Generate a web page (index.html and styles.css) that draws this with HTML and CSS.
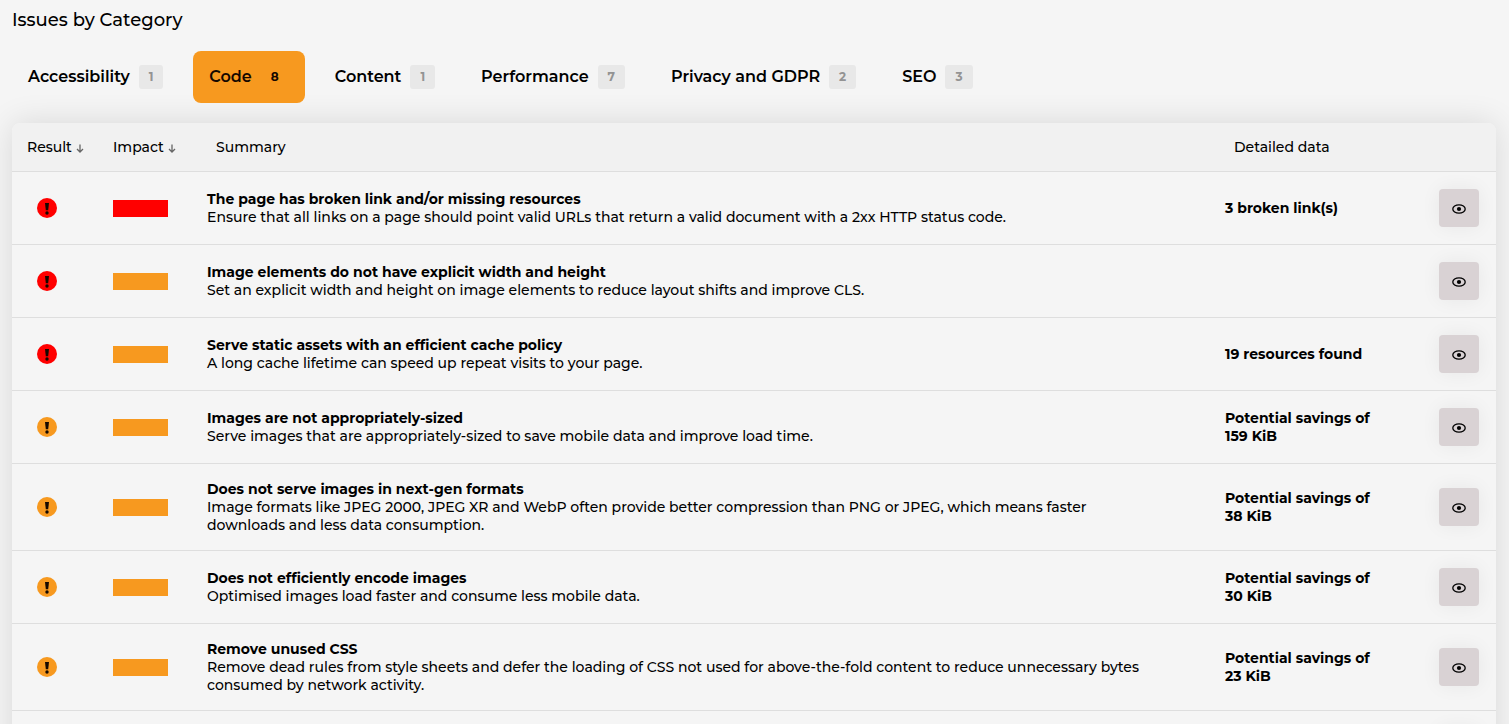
FILE: index.html
```html
<!DOCTYPE html>
<html lang="en">
<head>
<meta charset="utf-8">
<meta name="viewport" content="width=device-width, initial-scale=1">
<title>Issues by Category</title>
<link rel="stylesheet" href="styles.css">
</head>
<body>
<svg width="0" height="0" class="sprite" aria-hidden="true">
  <symbol id="eye" viewBox="0 0 14 10">
    <ellipse cx="7" cy="5" rx="6.200" ry="4.200" fill="none" stroke="currentColor" stroke-width="1.300"/>
    <circle cx="7" cy="5" r="2.1" fill="currentColor"/>
  </symbol>
  <symbol id="alert" viewBox="0 0 20 20">
    <circle cx="10" cy="10" r="10" fill="currentColor"/>
    <path d="M8 5h4l-.8 7.200H8.800z" fill="#140800"/>
    <circle cx="10" cy="15" r="1.700" fill="#140800"/>
  </symbol>
  <symbol id="down" viewBox="0 0 8 9">
    <path d="M4 .5v7.500M1 5l3 3 3-3" fill="none" stroke="currentColor" stroke-width="1.300"/>
  </symbol>
</svg>
<main class="page">
  <h1 class="title">Issues by Category</h1>
  <nav class="tabs" aria-label="Categories">
    <button class="tab" type="button">Accessibility <span class="count">1</span></button>
    <button class="tab tab-active" type="button">Code <span class="count">8</span></button>
    <button class="tab" type="button">Content <span class="count">1</span></button>
    <button class="tab" type="button">Performance <span class="count">7</span></button>
    <button class="tab" type="button">Privacy and GDPR <span class="count">2</span></button>
    <button class="tab" type="button">SEO <span class="count">3</span></button>
  </nav>
  <table class="issues">
    <colgroup><col class="col-result"><col class="col-impact"><col><col class="col-detail"><col class="col-action"></colgroup>
    <thead>
      <tr>
        <th scope="col">Result<svg class="sort"><use href="#down"/></svg></th>
        <th scope="col">Impact<svg class="sort"><use href="#down"/></svg></th>
        <th scope="col" class="wide">Summary</th>
        <th scope="col" class="wide">Detailed data</th>
        <td></td>
      </tr>
    </thead>
    <tbody>
      <tr>
        <td class="result bad"><svg class="alert"><use href="#alert"/></svg></td>
        <td><div class="impact high"></div></td>
        <td class="summary"><strong>The page has broken link and/or missing resources</strong><p>Ensure that all links on a page should point valid URLs that return a valid document with a 2xx HTTP status code.</p></td>
        <td class="detail">3 broken link(s)</td>
        <td class="action"><button class="view" type="button" aria-label="View"><svg class="eye"><use href="#eye"/></svg></button></td>
      </tr>
      <tr>
        <td class="result bad"><svg class="alert"><use href="#alert"/></svg></td>
        <td><div class="impact"></div></td>
        <td class="summary"><strong>Image elements do not have explicit width and height</strong><p>Set an explicit width and height on image elements to reduce layout shifts and improve CLS.</p></td>
        <td class="detail"></td>
        <td class="action"><button class="view" type="button" aria-label="View"><svg class="eye"><use href="#eye"/></svg></button></td>
      </tr>
      <tr>
        <td class="result bad"><svg class="alert"><use href="#alert"/></svg></td>
        <td><div class="impact"></div></td>
        <td class="summary"><strong>Serve static assets with an efficient cache policy</strong><p>A long cache lifetime can speed up repeat visits to your page.</p></td>
        <td class="detail">19 resources found</td>
        <td class="action"><button class="view" type="button" aria-label="View"><svg class="eye"><use href="#eye"/></svg></button></td>
      </tr>
      <tr>
        <td class="result"><svg class="alert"><use href="#alert"/></svg></td>
        <td><div class="impact"></div></td>
        <td class="summary"><strong>Images are not appropriately-sized</strong><p>Serve images that are appropriately-sized to save mobile data and improve load time.</p></td>
        <td class="detail">Potential savings of 159 KiB</td>
        <td class="action"><button class="view" type="button" aria-label="View"><svg class="eye"><use href="#eye"/></svg></button></td>
      </tr>
      <tr>
        <td class="result"><svg class="alert"><use href="#alert"/></svg></td>
        <td><div class="impact"></div></td>
        <td class="summary"><strong>Does not serve images in next-gen formats</strong><p>Image formats like JPEG 2000, JPEG XR and WebP often provide better compression than PNG or JPEG, which means faster downloads and less data consumption.</p></td>
        <td class="detail">Potential savings of 38 KiB</td>
        <td class="action"><button class="view" type="button" aria-label="View"><svg class="eye"><use href="#eye"/></svg></button></td>
      </tr>
      <tr>
        <td class="result"><svg class="alert"><use href="#alert"/></svg></td>
        <td><div class="impact"></div></td>
        <td class="summary"><strong>Does not efficiently encode images</strong><p>Optimised images load faster and consume less mobile data.</p></td>
        <td class="detail">Potential savings of 30 KiB</td>
        <td class="action"><button class="view" type="button" aria-label="View"><svg class="eye"><use href="#eye"/></svg></button></td>
      </tr>
      <tr>
        <td class="result"><svg class="alert"><use href="#alert"/></svg></td>
        <td><div class="impact"></div></td>
        <td class="summary"><strong>Remove unused CSS</strong><p>Remove dead rules from style sheets and defer the loading of CSS not used for above-the-fold content to reduce unnecessary bytes consumed by network activity.</p></td>
        <td class="detail">Potential savings of 23 KiB</td>
        <td class="action"><button class="view" type="button" aria-label="View"><svg class="eye"><use href="#eye"/></svg></button></td>
      </tr>
      <tr>
        <td></td><td></td><td></td><td></td>
        <td class="action"><button class="view" type="button" aria-label="View"><svg class="eye"><use href="#eye"/></svg></button></td>
      </tr>
    </tbody>
  </table>
</main>
</body>
</html>
```
FILE: styles.css
```css
* { box-sizing: border-box; }
body {
  margin: 0;
  background: #f5f5f5;
  color: #000;
  font: 500 14px/18px Montserrat, Inter, sans-serif;
}
.sprite { position: absolute; }
.page { height: 100vh; overflow: hidden; padding: 8px 13px 0 12px; }
.title { margin: 0; font-size: 18px; line-height: 24px; font-weight: 500; }
.tabs { display: flex; gap: 14px; margin: 19px 0 20px; }
.tab {
  display: flex;
  align-items: center;
  gap: 9px;
  height: 52px;
  padding: 0 16px;
  border: 0;
  border-radius: 8px;
  background: none;
  color: #000;
  font: 600 16px/24px Montserrat, Inter, sans-serif;
}
.tab-active { background: #f7991f; color: #140800; }
.count {
  padding: 0 10px;
  border-radius: 3px;
  background: #e8e8e8;
  color: #939393;
  font-size: 12px;
  font-weight: 700;
}
.tab-active .count { background: none; color: #140800; }
.issues {
  width: 100%;
  table-layout: fixed;
  border-collapse: separate;
  border-spacing: 0;
  border-radius: 8px 8px 0 0;
  background: #f5f5f5;
  box-shadow: 0 0 32px rgba(0, 0, 0, 0.12);
}
.col-result { width: 86px; }
.col-impact { width: 94px; }
.col-detail { width: 196px; }
.col-action { width: 90px; }
th, td {
  padding: 16px 15px;
  border-bottom: 1px solid #dedede;
  text-align: left;
  vertical-align: middle;
}
.summary { padding-right: 50px; }
thead th, thead td {
  padding: 15px;
  background: #f1f1f1;
  font-weight: 500;
  white-space: nowrap;
}
thead th.wide { padding-left: 24px; }
thead th:first-child { border-top-left-radius: 8px; }
thead td:last-child { border-top-right-radius: 8px; }
p { margin: 0; }
strong, .detail { font-weight: 700; }
.detail { padding-right: 30px; }
.sort { width: 8px; height: 9px; margin-left: 4px; color: #666; vertical-align: -1px; }
.result { padding-left: 25px; color: #f7991f; }
.bad { color: #f00; }
.alert { display: block; width: 20px; height: 20px; }
.impact { width: 55px; height: 17px; background: #f7991f; }
.high { background: #f00; }
.action { padding: 17px; text-align: right; }
.view {
  display: inline-flex;
  align-items: center;
  justify-content: center;
  width: 40px;
  height: 38px;
  padding: 2px 0 0;
  border: 0;
  border-radius: 4px;
  background: #d9d2d4;
  color: #000;
  box-shadow: 0 0 20px rgba(0, 0, 0, 0.06);
  vertical-align: top;
}
.eye { width: 14px; height: 10px; }
```
